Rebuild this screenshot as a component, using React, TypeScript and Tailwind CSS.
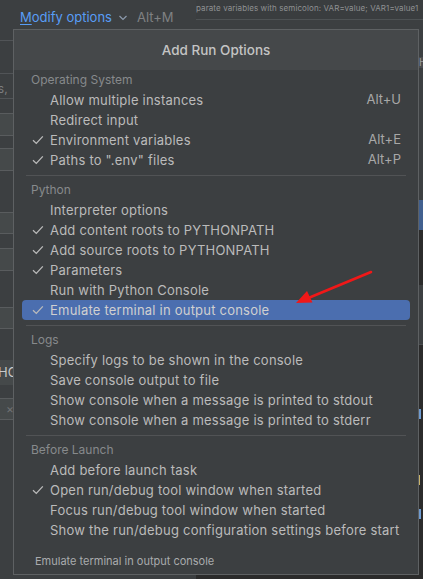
import React from 'react';

type Item = { label: string; checked?: boolean; shortcut?: string; selected?: boolean };
type Section = { title: string; items: Item[] };

const sections: Section[] = [
  {
    title: 'Operating System',
    items: [
      { label: 'Allow multiple instances', shortcut: 'Alt+U' },
      { label: 'Redirect input' },
      { label: 'Environment variables', checked: true, shortcut: 'Alt+E' },
      { label: 'Paths to ".env" files', checked: true, shortcut: 'Alt+P' },
    ],
  },
  {
    title: 'Python',
    items: [
      { label: 'Interpreter options' },
      { label: 'Add content roots to PYTHONPATH', checked: true },
      { label: 'Add source roots to PYTHONPATH', checked: true },
      { label: 'Parameters', checked: true },
      { label: 'Run with Python Console' },
      { label: 'Emulate terminal in output console', checked: true, selected: true },
    ],
  },
  {
    title: 'Logs',
    items: [
      { label: 'Specify logs to be shown in the console' },
      { label: 'Save console output to file' },
      { label: 'Show console when a message is printed to stdout' },
      { label: 'Show console when a message is printed to stderr' },
    ],
  },
  {
    title: 'Before Launch',
    items: [
      { label: 'Add before launch task' },
      { label: 'Open run/debug tool window when started', checked: true },
      { label: 'Focus run/debug tool window when started' },
      { label: 'Show the run/debug configuration settings before start' },
    ],
  },
];

function Check() {
  return (
    <svg width="12" height="12" viewBox="0 0 12 12" className="absolute left-[10px] top-[4px]">
      <path d="M1 6.2 L4.3 9.4 L10.8 2.4" fill="none" stroke="#bbbbbb" strokeWidth="1.3" />
    </svg>
  );
}

function Row({ item }: { item: Item }) {
  return (
    <div
      className={
        'relative mx-2 h-[20px] flex items-center pl-[28px] pr-[9px] rounded-[4px] ' +
        (item.selected ? 'bg-[#4b6eaf] text-[#d0d0d0]' : 'text-[#bbbbbb]')
      }
    >
      {item.checked && <Check />}
      <span className="flex-1 text-[13px] leading-[20px] tracking-[0.22px] whitespace-nowrap">{item.label}</span>
      {item.shortcut && <span className="text-[13px] text-[#a8a8a8]">{item.shortcut}</span>}
    </div>
  );
}

export default function App() {
  return (
    <div className="relative w-[423px] h-[579px] overflow-hidden bg-[#3c3f41] font-['Inter',sans-serif] flex flex-col">
      {/* Top bar of the dialog behind */}
      <div className="h-[30px] flex">
        <div className="w-[196px] shrink-0 flex items-start pt-[8px] pl-[20px]">
          <span className="text-[13px] text-[#589df6] leading-[18px]">
            <span className="underline underline-offset-2">M</span>odify options
          </span>
          <svg width="10" height="10" viewBox="0 0 10 10" className="ml-[6px] mt-[5px]">
            <path d="M1.5 3 L5 6.5 L8.5 3" fill="none" stroke="#8c9aad" strokeWidth="1.2" />
          </svg>
          <span className="ml-[9px] text-[13px] text-[#7f8183] leading-[18px]">Alt+M</span>
        </div>
        <div className="flex-1 min-w-0 flex flex-col">
          <div className="h-[20px] border-b border-[#4e5254] bg-[#3a3d3f] text-[8px] tracking-[0.1px] text-[#8f9193] leading-[16px] whitespace-nowrap overflow-hidden">
            parate variables with semicolon: VAR=value; VAR1=value1
          </div>
        </div>
      </div>

      {/* Body of the dialog behind */}
      <div className="flex-1 flex">
        {/* left edge of fields */}
        <div className="w-[13px] flex flex-col">
          <div className="h-[10px]" />
          <div className="h-[33px] border-t border-[#515457]" />
          <div className="h-[26px] border-t border-b border-[#515457] text-[12px] text-[#7c7e80] leading-[30px] -indent-[6px] overflow-hidden whitespace-nowrap">ts,</div>
          <div className="h-[14px]" />
          <div className="h-[23px] bg-[#45494a] border-y border-[#595c5e]" />
          <div className="h-[12px]" />
          <div className="h-[23px] bg-[#45494a] border-y border-[#595c5e]" />
          <div className="h-[41px]" />
          <div className="h-[22px] bg-[#45494a] border-y border-[#595c5e]" />
          <div className="h-[14px]" />
          <div className="h-[23px] bg-[#45494a] border-y border-[#595c5e]" />
          <div className="h-[36px]" />
          <div className="h-[22px] bg-[#45494a] border-y border-[#595c5e]" />
          <div className="h-[31px]" />
          <div className="h-[25px] bg-[#45494a] text-[13px] text-[#c8c8c8] leading-[25px] overflow-hidden whitespace-nowrap -indent-[2px]">HO</div>
          <div className="h-[13px]" />
          <div className="h-[22px] bg-[#45494a] border-y border-[#595c5e] text-[12px] text-[#6e7072] leading-[20px] pl-[6px] overflow-hidden">×</div>
          <div className="flex-1" />
        </div>
        <div className="flex-1 flex flex-col">
          <div className="flex-1" />
          <div className="h-[5px] flex">
            <div className="w-[183px]" />
            <div className="flex-1 bg-[#2b2b2b]" />
          </div>
        </div>
        {/* right edge */}
        <div className="w-[5px] flex flex-col">
          <div className="h-[27px]" />
          <div className="h-[11px] bg-[#4a4d50] text-[10px] text-[#9a9c9e] leading-[11px] pl-[1px] overflow-hidden">H</div>
          <div className="h-[132px]" />
          <div className="h-[30px] bg-[#41608f]" />
          <div className="h-[55px] bg-[#2b2b2b]" />
          <div className="h-[60px] border-b border-[#4a4d50]" />
          <div className="flex-1 bg-[#2b2b2b] flex flex-col">
            <div className="h-[64px]" />
            <div className="h-[10px] w-[3px] bg-[#6f9bd0]" />
            <div className="h-[56px]" />
            <div className="h-[10px] w-[2px] bg-[#c9b46a]" />
            <div className="h-[24px]" />
            <div className="h-[10px] w-[3px] bg-[#6f9bd0]" />
          </div>
        </div>
      </div>

      {/* Add Run Options popup */}
      <div className="absolute left-[13px] top-[29px] w-[406px] h-[546px] border border-[#5e6163] bg-[#3c3f41] flex flex-col">
        <div className="h-[40px] bg-[#45484a] flex items-center justify-center text-[13.5px] font-medium text-[#c4c4c4]">
          Add Run Options
        </div>
        {sections.map((s, i) => (
          <div key={s.title}>
            {i > 0 && (
              <div className="h-[10px] flex items-center px-3">
                <div className="flex-1 h-px bg-[#515355]" />
              </div>
            )}
            <div className="h-[20px] pl-[17px] text-[12px] leading-[20px] text-[#878a8c]">{s.title}</div>
            {s.items.map((it) => (
              <Row key={it.label} item={it} />
            ))}
          </div>
        ))}
        <div className="pt-[14px] pl-[21px] text-[11px] leading-[14px] text-[#a9abad]">
          Emulate terminal in output console
        </div>
      </div>

      {/* red annotation arrow */}
      <svg className="absolute inset-0 pointer-events-none" width="423" height="579">
        <line x1="371" y1="272" x2="306" y2="299" stroke="#f01818" strokeWidth="2.6" strokeLinecap="round" />
        <polygon points="296,303 312.5,302.5 307,291" fill="#f01818" />
      </svg>
    </div>
  );
}
